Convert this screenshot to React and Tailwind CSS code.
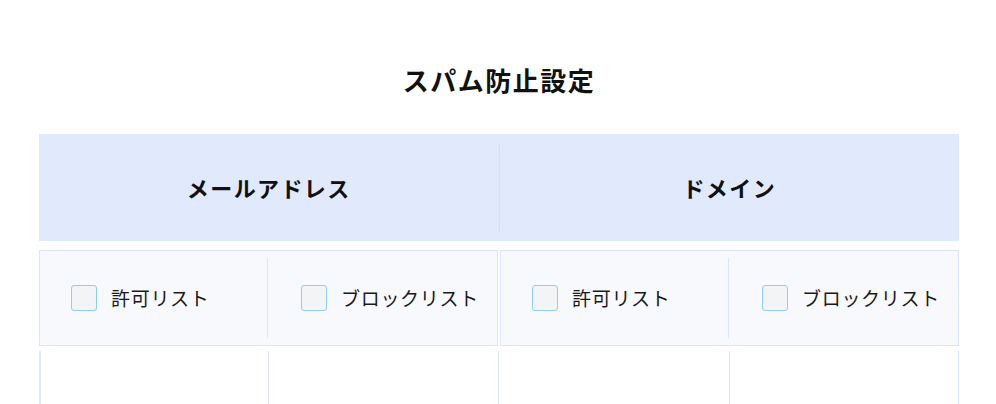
import React from "react";

const groups = [
  { key: "email", title: "メールアドレス" },
  { key: "domain", title: "ドメイン" },
];

const options = ["許可リスト", "ブロックリスト"];

function Checkbox() {
  return (
    <span className="inline-block w-[26px] h-[26px] shrink-0 rounded-[3px] border border-[#90cdf4] bg-[#f3f4f6]" />
  );
}

export default function App() {
  return (
    <div
      className="min-h-screen bg-white pl-[39px] pr-[37px] pt-[62px] text-[#111]"
      style={{ fontFamily: '"Noto Sans CJK JP", "Noto Sans", sans-serif' }}
    >
      <h1 className="text-center text-[26px] font-bold leading-[36px] tracking-[1.5px]">スパム防止設定</h1>

      {/* header band */}
      <div className="mt-[36px] flex h-[107px] items-center bg-[#e1eafc]">
        <div className="flex-1 text-center text-[22px] font-bold tracking-[1.4px]">{groups[0].title}</div>
        <div className="h-[86px] w-px bg-[#d5e1f6]" />
        <div className="flex-1 text-center text-[22px] font-bold tracking-[1.4px]">{groups[1].title}</div>
      </div>

      {/* option row */}
      <div className="mt-[9px] flex gap-[2px]">
        {groups.map((g) => (
          <div key={g.key} className="flex h-[96px] flex-1 border border-[#dbe6f8] bg-[#f7f9fd] py-[7px]">
            {options.map((o, i) => (
              <label
                key={o}
                className={
                  i === 0
                    ? "flex flex-1 items-center gap-[14px] pl-[31px]"
                    : "flex flex-1 items-center gap-[14px] border-l border-[#dbe6f8] pl-[33px]"
                }
              >
                <Checkbox />
                <span className="text-[19px] tracking-[0.7px] text-[#1a1a1a]">{o}</span>
              </label>
            ))}
          </div>
        ))}
      </div>

      {/* empty body row */}
      <div className="mt-[5px] flex h-[60px]">
        <div className="w-[229px] border-l-2 border-[#e3ebfb]" />
        <div className="w-[230px] border-l border-[#dbe5f8]" />
        <div className="w-[231px] border-l border-[#dbe5f8]" />
        <div className="flex-1 border-x border-[#dbe5f8]" />
      </div>
    </div>
  );
}
